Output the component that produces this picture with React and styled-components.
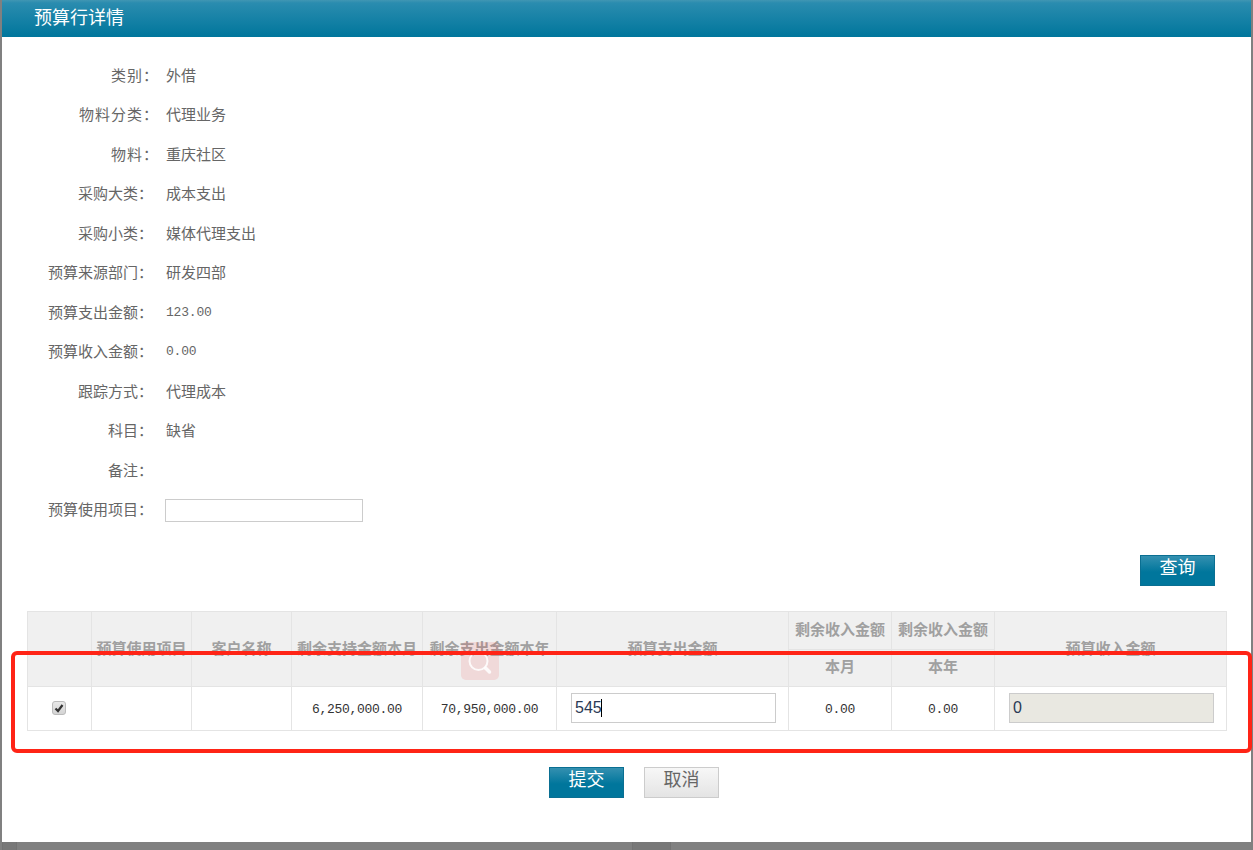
import styled, { createGlobalStyle } from "styled-components";

const GlobalStyle = createGlobalStyle`
    html, body {
        margin: 0;
        padding: 0;
        background-color: #808080;
    }
    body {
        font-family: "Liberation Sans", "Noto Sans CJK SC", sans-serif;
    }
`

const fields = [
    { label: "类别：", value: "外借", wide: true },
    { label: "物料分类：", value: "代理业务", wide: true },
    { label: "物料：", value: "重庆社区", wide: true },
    { label: "采购大类：", value: "成本支出" },
    { label: "采购小类：", value: "媒体代理支出" },
    { label: "预算来源部门：", value: "研发四部" },
    { label: "预算支出金额：", value: "123.00", mono: true },
    { label: "预算收入金额：", value: "0.00", mono: true },
    { label: "跟踪方式：", value: "代理成本" },
    { label: "科目：", value: "缺省" },
    { label: "备注：", value: "" },
]

export default function App() {
    return (
        <Page>
            <GlobalStyle />
            <Panel>
                <Header>预算行详情</Header>
                <Form>
                    {fields.map((field) => (
                        <FieldRow key={field.label}>
                            <FieldLabel $wide={field.wide}>{field.label}</FieldLabel>
                            <FieldValue $wide={field.wide} $mono={field.mono}>{field.value}</FieldValue>
                        </FieldRow>
                    ))}
                    <FieldRow>
                        <FieldLabel>预算使用项目：</FieldLabel>
                        <ProjectInput type="text" />
                    </FieldRow>
                </Form>
                <QueryBar>
                    <PrimaryButton>查询</PrimaryButton>
                </QueryBar>
                <TableWrap>
                    <Table>
                        <thead>
                            <tr>
                                <HeadCell rowSpan={2} $w={64}></HeadCell>
                                <HeadCell rowSpan={2} $w={100}>预算使用项目</HeadCell>
                                <HeadCell rowSpan={2} $w={100}>客户名称</HeadCell>
                                <HeadCell rowSpan={2} $w={131}>剩余支持金额本月</HeadCell>
                                <HeadCell rowSpan={2} $w={134}>剩余支出金额本年</HeadCell>
                                <HeadCell rowSpan={2} $w={232}>预算支出金额</HeadCell>
                                <HeadCell $w={103}>剩余收入金额</HeadCell>
                                <HeadCell $w={103}>剩余收入金额</HeadCell>
                                <HeadCell rowSpan={2} $w={232}>预算收入金额</HeadCell>
                            </tr>
                            <tr>
                                <HeadCell>本月</HeadCell>
                                <HeadCell>本年</HeadCell>
                            </tr>
                        </thead>
                        <tbody>
                            <tr>
                                <DataCell>
                                    <CheckBox>
                                        <svg width="10" height="10" viewBox="0 0 10 10">
                                            <path d="M1.5 5.5 L4 8 L8.5 2" fill="none" stroke="#333" strokeWidth="2.2" />
                                        </svg>
                                    </CheckBox>
                                </DataCell>
                                <DataCell></DataCell>
                                <DataCell></DataCell>
                                <DataCell>6,250,000.00</DataCell>
                                <DataCell>70,950,000.00</DataCell>
                                <InputCell>
                                    <InputWrap>
                                        <AmountInput type="text" defaultValue="545" />
                                        <Caret />
                                    </InputWrap>
                                </InputCell>
                                <DataCell>0.00</DataCell>
                                <DataCell>0.00</DataCell>
                                <InputCell>
                                    <InputWrap>
                                        <AmountInput type="text" defaultValue="0" readOnly $disabled />
                                    </InputWrap>
                                </InputCell>
                            </tr>
                        </tbody>
                    </Table>
                    <Watermark>
                        <svg width="38" height="38" viewBox="0 0 38 38">
                            <circle cx="17.5" cy="19" r="9" fill="none" stroke="rgba(255,255,255,0.85)" strokeWidth="2" />
                            <path d="M24.5 26 L28.5 30" stroke="rgba(255,255,255,0.85)" strokeWidth="3.5" strokeLinecap="round" />
                        </svg>
                    </Watermark>
                </TableWrap>
                <ButtonBar>
                    <PrimaryButton>提交</PrimaryButton>
                    <CancelButton>取消</CancelButton>
                </ButtonBar>
                <RedMark />
            </Panel>
            <BottomStrip>
                <StripTab $left={2} $w={15} />
                <StripTab $left={615} $w={39} />
            </BottomStrip>
        </Page>
    )
}

const Page = styled.div`
    height: 850px;
    overflow: hidden;
    background-color: #808080;
`

const Panel = styled.div`
    position: relative;
    margin: 0 2px;
    height: 842px;
    background-color: #fff;
`

const BottomStrip = styled.div`
    display: flex;
    height: 8px;
`

const StripTab = styled.div`
    box-sizing: border-box;
    width: ${(props) => props.$w}px;
    margin-left: ${(props) => props.$left}px;
    background-color: #787878;
    border: 1px solid #737373;
    border-width: 0 1px;
`

const Header = styled.div`
    height: 37px;
    line-height: 37px;
    padding-left: 32px;
    background: linear-gradient(to bottom, #4096b3 0, #2a8caf 3px, #00769c 100%);
    color: #fff;
    font-size: 18px;
`

const Form = styled.div`
    padding-top: 17.5px;
`

const FieldRow = styled.div`
    display: flex;
    align-items: center;
    height: 39.5px;
`

const FieldLabel = styled.div`
    width: ${(props) => (props.$wide ? "157px" : "151px")};
    text-align: right;
    font-size: 15px;
    letter-spacing: ${(props) => (props.$wide ? "1px" : "0")};
    color: #666;
    flex-shrink: 0;
`

const FieldValue = styled.div`
    margin-left: ${(props) => (props.$wide ? "7px" : "13px")};
    margin-top: ${(props) => (props.$mono ? "2px" : "0")};
    color: #666;
    font-size: ${(props) => (props.$mono ? "13px" : "15px")};
    letter-spacing: ${(props) => (props.$mono ? "-0.2px" : "0")};
    font-family: ${(props) => (props.$mono ? '"Liberation Mono", monospace' : "inherit")};
`

const ProjectInput = styled.input`
    box-sizing: border-box;
    width: 198px;
    height: 23px;
    margin: 3px 0 0 12px;
    border: 1px solid #ccc;
    background-color: #fff;
    outline: none;
`

const QueryBar = styled.div`
    display: flex;
    justify-content: flex-end;
    padding: 26.5px 36px 25px 0;
`

const PrimaryButton = styled.button`
    box-sizing: border-box;
    width: 75px;
    height: 31px;
    padding: 0 0 5px;
    border: 1px solid #0a6f92;
    background: linear-gradient(to bottom, #3490b0 0, #00769c 55%, #00769c 100%);
    color: #fff;
    font-family: inherit;
    font-size: 18px;
    line-height: 18px;
`

const CancelButton = styled.button`
    box-sizing: border-box;
    width: 75px;
    height: 31px;
    padding: 0 0 5px;
    border: 1px solid #ccc;
    background: linear-gradient(to bottom, #f7f7f7 0, #e4e4e4 100%);
    color: #666;
    font-family: inherit;
    font-size: 18px;
    line-height: 18px;
`

const TableWrap = styled.div`
    position: relative;
    margin: 0 24px 0 25px;
`

const Table = styled.table`
    width: 1199px;
    table-layout: fixed;
    border-collapse: collapse;
`

const HeadCell = styled.th`
    box-sizing: border-box;
    width: ${(props) => (props.$w ? `${props.$w}px` : "auto")};
    height: 37.5px;
    padding: 0 0 4px;
    border: 1px solid #e4e4e4;
    background-color: #f0f0f0;
    color: #a0a0a0;
    font-size: 15px;
    font-weight: bold;
    text-align: center;
    white-space: nowrap;
`

const DataCell = styled.td`
    box-sizing: border-box;
    height: 44px;
    padding: 2px 0 0;
    border: 1px solid #e4e4e4;
    color: #333;
    font-family: "Liberation Mono", monospace;
    font-size: 13px;
    letter-spacing: -0.3px;
    text-align: center;
`

const InputCell = styled(DataCell)`
    padding: 0;
`

const CheckBox = styled.span`
    display: inline-flex;
    align-items: center;
    justify-content: center;
    box-sizing: border-box;
    width: 14px;
    height: 14px;
    margin: 0 2px 3px 0;
    vertical-align: middle;
    border: 1px solid #bbb;
    border-radius: 3px;
    background: linear-gradient(to bottom, #e8e8e8, #d4d4d4);
`

const InputWrap = styled.div`
    position: relative;
    width: 205px;
    margin: -1px 0 1px 14px;
`

const AmountInput = styled.input`
    display: block;
    box-sizing: border-box;
    width: 100%;
    height: 30px;
    padding: 0 3px;
    border: 1px solid #ccc;
    outline: none;
    background-color: ${(props) => (props.$disabled ? "#e9e8e1" : "#fff")};
    color: #2b3a55;
    font-family: "Liberation Sans", sans-serif;
    font-size: 16px;
`

const Caret = styled.span`
    position: absolute;
    left: 30px;
    top: 6px;
    width: 1px;
    height: 18px;
    background-color: #000;
`

const Watermark = styled.div`
    position: absolute;
    left: 434px;
    top: 31px;
    width: 38px;
    height: 38px;
    border-radius: 5px;
    background-color: rgba(240, 60, 60, 0.13);
`

const ButtonBar = styled.div`
    display: flex;
    justify-content: center;
    gap: 20px;
    padding-top: 36px;
    padding-left: 15px;
`

const RedMark = styled.div`
    position: absolute;
    left: 9px;
    top: 651px;
    width: 1241px;
    height: 102px;
    box-sizing: border-box;
    border: 4px solid #ff2416;
    border-radius: 6px;
    pointer-events: none;
`
